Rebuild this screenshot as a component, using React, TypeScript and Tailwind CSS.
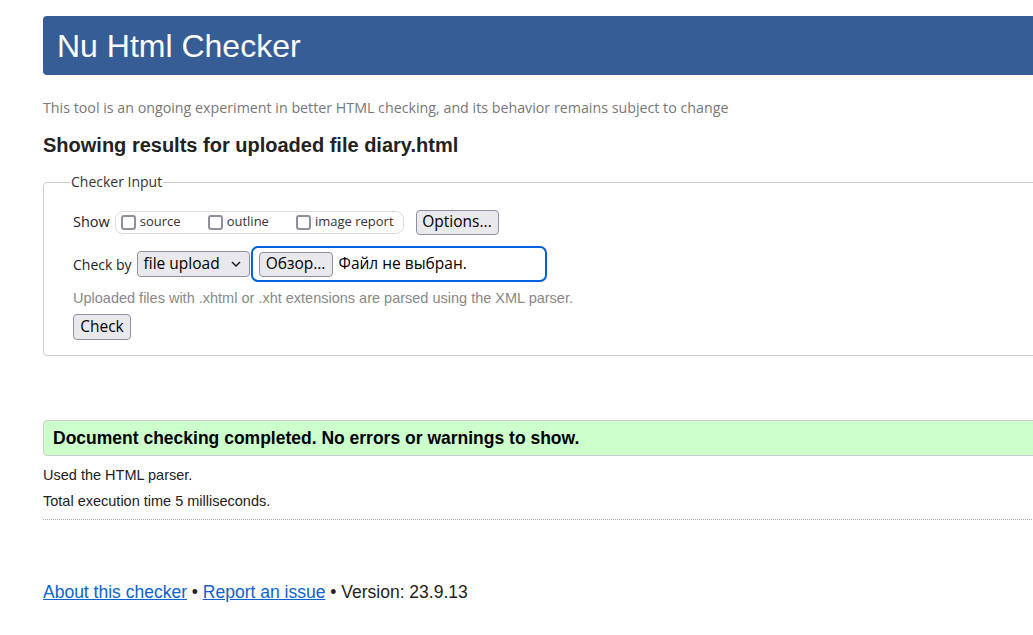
import React from "react";

const seg = "font-['Open_Sans','Noto_Sans',sans-serif]";
const btn =
  "bg-[#e9e9ed] border border-[#8f8f9d] rounded-[4px] text-black leading-none flex items-center";

function Box() {
  return <span className="block w-[15px] h-[15px] border-2 border-[#8f8f9d] rounded-[3px] bg-white shrink-0" />;
}

export default function App() {
  return (
    <div className="w-full h-[635px] overflow-hidden bg-white font-['Liberation_Sans',Arial,sans-serif] text-[#222]">
      <div className="pl-[43px] pt-[16px] w-[1120px]">
        {/* header */}
        <div className="h-[59px] bg-[#365d95] rounded-l-[4px] pl-[14px] flex items-center">
          <h1 className="text-white text-[32px] leading-none">Nu Html Checker</h1>
        </div>

        <p className={`${seg} mt-[23px] h-[20px] leading-[20px] text-[14.25px] text-[#777]`}>
          This tool is an ongoing experiment in better HTML checking, and its behavior remains subject to change
        </p>

        <h2 className="mt-[15px] h-[24px] leading-[24px] text-[20px] font-bold text-[#222]">
          Showing results for uploaded file diary.html
        </h2>

        {/* checker input */}
        <fieldset className="mt-[15px] border border-[#ccc] rounded-[4px] pl-[29px] pt-[17px] pb-[15px]">
          <legend className={`${seg} -ml-[3px] px-[1px] text-[14px] leading-[20px] text-[#333]`}>Checker Input</legend>

          <div className={`${seg} flex items-center h-[26px] text-[14.5px] text-[#222]`}>
            <span className="mr-[5px]">Show</span>
            <div className="h-[23px] border border-[#ddd] rounded-[8px] flex items-center pl-[5px] pr-[9px] text-[13px] text-[#333]">
              <label className="flex items-center gap-[4px]">
                <Box />
                <span>source</span>
              </label>
              <label className="flex items-center gap-[4px] ml-[27px]">
                <Box />
                <span>outline</span>
              </label>
              <label className="flex items-center gap-[4px] ml-[27px]">
                <Box />
                <span>image report</span>
              </label>
            </div>
            <button className={`${btn} ml-[12px] h-[25px] w-[83px] justify-center text-[15.5px]`}>Options...</button>
          </div>

          <div className={`${seg} flex items-center h-[36px] mt-[11px] text-[14px] text-[#222]`}>
            <span className="mr-[5px]">Check by</span>
            <div className={`${btn} h-[26px] w-[113px] pl-[6px] pr-[8px] justify-between text-[15.5px]`}>
              <span>file upload</span>
              <svg width="10" height="6" viewBox="0 0 10 6" fill="none" stroke="#222" strokeWidth="1.5">
                <path d="M1 1l4 4 4-4" />
              </svg>
            </div>
            <div className="ml-[1px] h-[36px] w-[296px] border-2 border-[#0060df] rounded-[7px] flex items-center pl-[6px]">
              <button className={`${btn} h-[25px] w-[74px] justify-center text-[15.5px]`}>Обзор...</button>
              <span className="ml-[6px] text-[15.5px] text-black">Файл не выбран.</span>
            </div>
          </div>

          <p className="mt-[7px] h-[18px] leading-[18px] text-[14.5px] text-[#888]">
            Uploaded files with .xhtml or .xht extensions are parsed using the XML parser.
          </p>

          <button className={`${btn} ${seg} mt-[7px] h-[26px] w-[58px] justify-center text-[15.5px]`}>Check</button>
        </fieldset>

        {/* results */}
        <div className="mt-[64px] h-[36px] border border-[#ccc] rounded-l-[4px] bg-[#ccffcc] flex items-center pl-[9px]">
          <p className="text-[17.5px] font-bold text-black">Document checking completed. No errors or warnings to show.</p>
        </div>

        <p className="mt-[9px] h-[20px] leading-[20px] text-[14.5px] text-[#222]">Used the HTML parser.</p>
        <p className="mt-[6px] h-[20px] leading-[20px] text-[14.5px] text-[#222]">Total execution time 5 milliseconds.</p>
        <div className="mt-[8px] border-t border-dotted border-[#aaa]" />

        <p className="mt-[61px] text-[17.5px] leading-[22px] text-[#222]">
          <a href="#" className="text-[#0b63ce] underline">About this checker</a>
          {" • "}
          <a href="#" className="text-[#0b63ce] underline">Report an issue</a>
          {" • Version: 23.9.13"}
        </p>
      </div>
    </div>
  );
}
